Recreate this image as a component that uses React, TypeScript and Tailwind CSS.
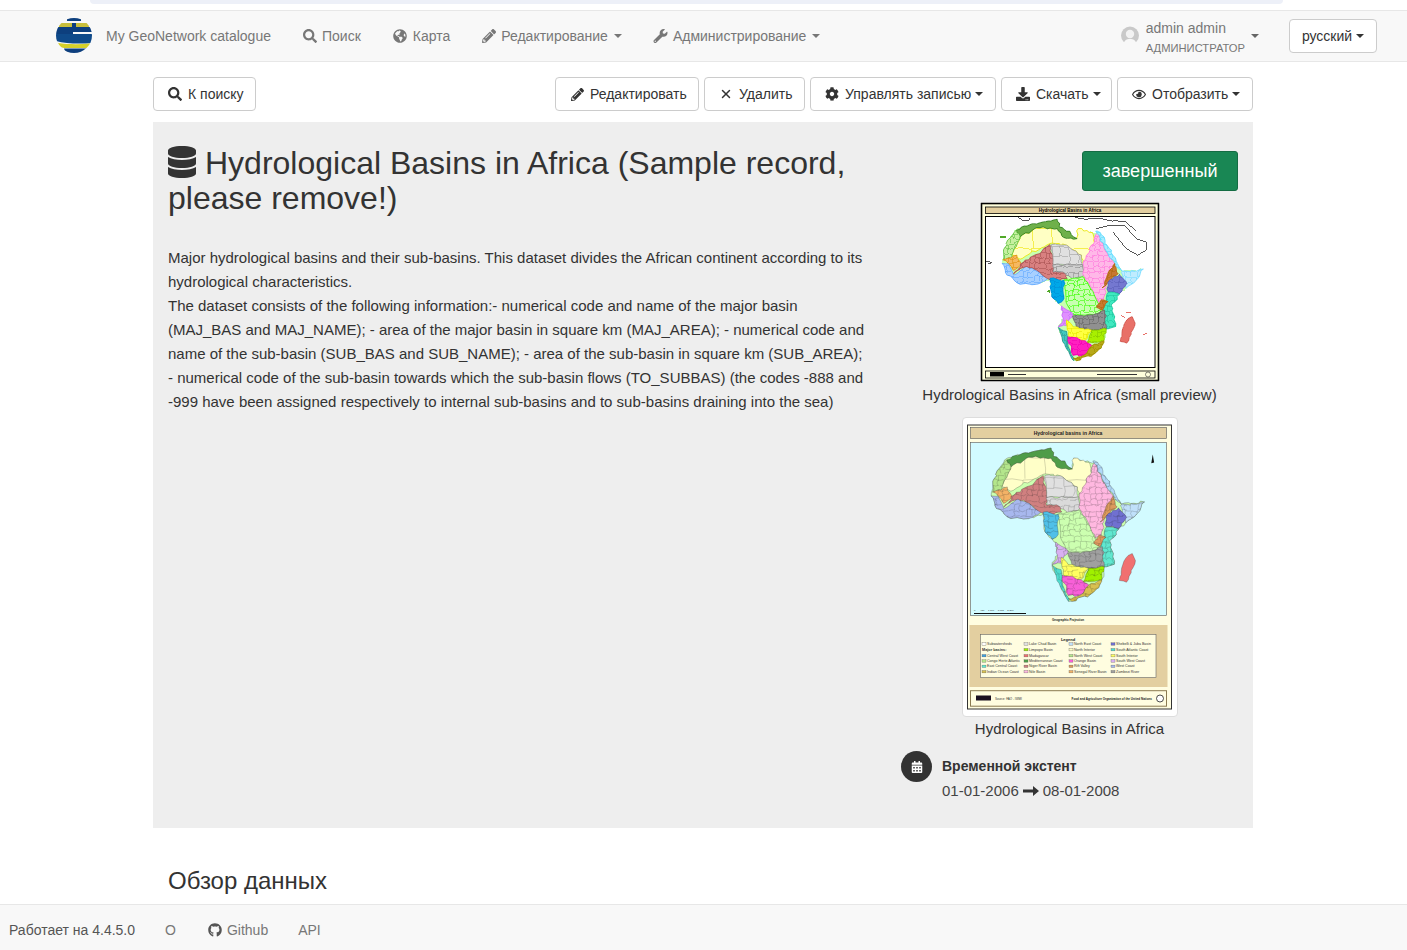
import type { ReactNode } from "react";
import {
  FaCalendarAlt,
  FaCog,
  FaDatabase,
  FaDownload,
  FaGithub,
  FaGlobeAmericas,
  FaPencilAlt,
  FaRegEye,
  FaSearch,
  FaWrench,
} from "react-icons/fa";
import { X } from "lucide-react";

type Region = { id: string; pts: number[]; fill: string; line: string; big: string };

const coast = [100,175,112,135,140,100,190,85,262,72,268,95,300,108,322,130,325,100,370,112,385,112,410,170,440,205,458,228,522,222,495,262,470,280,450,298,425,330,438,395,410,402,405,435,395,460,370,480,320,498,310,498,290,460,265,400,265,390,280,370,275,335,265,325,245,305,240,255,200,268,150,268,110,240,95,205];

const regions: Region[] = [
  { id: "sahara", pts: [125,180,150,125,200,97,240,92,262,100,290,125,320,130,325,100,368,112,382,160,345,210,335,180,290,150,240,145,180,175,150,192], fill: "#ffffc4", line: "#eee400", big: "#ffffc8" },
  { id: "med", pts: [138,105,190,85,262,72,268,95,300,108,322,130,280,126,262,100,200,97,150,125], fill: "#6fb04a", line: "#2f7d1f", big: "#4f9c48" },
  { id: "nw", pts: [100,175,112,135,138,105,150,125,125,180,125,190,100,192], fill: "#c6f0a0", line: "#5fc040", big: "#b4e68c" },
  { id: "senegal", pts: [98,194,140,180,155,210,130,226,115,206], fill: "#f6b860", line: "#e09010", big: "#f3b266" },
  { id: "guinea", pts: [95,205,115,206,130,240,170,210,200,225,235,250,200,268,150,268,110,240], fill: "#a8d0ff", line: "#60a8ff", big: "#a8b8ee" },
  { id: "niger", pts: [130,236,165,195,210,175,240,148,250,200,250,232,285,228,292,250,255,256,232,250,200,225,170,214], fill: "#d88080", line: "#a85050", big: "#d08080" },
  { id: "chad", pts: [245,148,290,150,335,180,338,208,250,210], fill: "#e0e0e0", line: "#a0a0a0", big: "#e0e0e0" },
  { id: "chad2", pts: [248,210,338,208,342,240,310,256,285,234,250,230], fill: "#d0d0d0", line: "#8c8c8c", big: "#dadada" },
  { id: "nile", pts: [340,206,365,150,385,112,405,165,435,205,440,225,415,260,400,320,385,322,370,290,342,242], fill: "#ffb8e8", line: "#ff78dc", big: "#ffb8e0" },
  { id: "redsea", pts: [378,108,392,112,440,198,458,228,440,214,410,168], fill: "#a8ecff", line: "#60dcff", big: "#b0d8f8" },
  { id: "horn", pts: [455,232,522,222,495,262,470,280], fill: "#c0ecff", line: "#78dcff", big: "#c0e0fa" },
  { id: "rift", pts: [435,205,446,236,415,262,398,278,410,250], fill: "#c87830", line: "#b06810", big: "#dc9a5c" },
  { id: "somali", pts: [415,262,450,238,472,265,450,296,415,290], fill: "#7478d0", line: "#5a60b8", big: "#7070d0" },
  { id: "east", pts: [415,292,450,298,425,330,438,395,410,402,400,345], fill: "#40e8c0", line: "#20c8a0", big: "#60e8d0" },
  { id: "congo", pts: [280,256,342,246,370,290,385,325,400,350,370,360,310,360,290,325], fill: "#c8ffb0", line: "#38ff00", big: "#ccffb0" },
  { id: "tana", pts: [395,314,415,320,398,346,380,336], fill: "#c87830", line: "#b06810", big: "#e09a60" },
  { id: "westc", pts: [240,250,282,256,282,312,265,326,245,305], fill: "#00a8e8", line: "#0090d8", big: "#50c0e8" },
  { id: "violet", pts: [275,333,310,360,305,368,290,392,265,396,280,370], fill: "#e090ff", line: "#c870f8", big: "#d8b0f0" },
  { id: "zambezi", pts: [308,364,370,360,405,346,410,402,370,406,320,396], fill: "#909090", line: "#686868", big: "#a0a0a0" },
  { id: "yellow", pts: [290,375,310,396,366,406,346,436,300,430], fill: "#ffff40", line: "#e8e800", big: "#ffff60" },
  { id: "lime", pts: [366,406,410,402,402,440,350,446], fill: "#a8f000", line: "#88c800", big: "#a0f000" },
  { id: "orange", pts: [292,425,346,438,374,460,340,482,310,482], fill: "#ff20c0", line: "#f000b0", big: "#f860d8" },
  { id: "namib", pts: [265,398,290,410,295,455,312,498,290,462], fill: "#40c8c0", line: "#309890", big: "#50dcd0" },
  { id: "cape", pts: [374,448,403,438,395,460,370,480,320,498,310,490,342,482], fill: "#b8a818", line: "#a09000", big: "#d8c050" },
  { id: "madagascar", pts: [488,365,497,385,490,405,472,445,452,440,462,395,470,378], fill: "#e87068", line: "#d05850", big: "#f07070" },
];

const noise = (a: number, b: number) => {
  const n = Math.sin(a * 12.9898 + b * 78.233) * 43758.5453;
  return n - Math.floor(n) - 0.5;
};

// break straight polygon edges up so basins don't look cut with a ruler
function roughen(pts: number[], amount = 7) {
  const out: number[] = [];
  for (let i = 0; i < pts.length; i += 2) {
    const [x0, y0] = [pts[i], pts[i + 1]];
    const [x1, y1] = [pts[(i + 2) % pts.length], pts[(i + 3) % pts.length]];
    const steps = Math.max(1, Math.round(Math.hypot(x1 - x0, y1 - y0) / 9));
    for (let s = 0; s < steps; s++) {
      const [x, y] = [x0 + ((x1 - x0) * s) / steps, y0 + ((y1 - y0) * s) / steps];
      out.push(x + (s ? noise(x, y) * amount : 0), y + (s ? noise(y, x) * amount : 0));
    }
  }
  return out;
}

const toPoints = (pts: number[]) => {
  const parts: string[] = [];
  for (let i = 0; i < pts.length; i += 2) parts.push(`${pts[i].toFixed(1)},${pts[i + 1].toFixed(1)}`);
  return parts.join(" ");
};

// sub-basin texture: broken jagged lines, clipped to each basin
function subLines(pts: number[], seed: number, step: number) {
  const xs = pts.filter((_, i) => i % 2 === 0);
  const ys = pts.filter((_, i) => i % 2 === 1);
  const [x0, x1, y0, y1] = [Math.min(...xs), Math.max(...xs), Math.min(...ys), Math.max(...ys)];
  let d = "";
  for (let y = y0 + 8; y < y1; y += step) {
    for (let x = x0; x < x1; x += step) {
      const [cx, cy] = [x + noise(x, y + seed) * 8, y + noise(y, x + seed) * 8];
      d += `M${cx.toFixed(1)} ${cy.toFixed(1)}`;
      d += `L${(cx + step * 0.5).toFixed(1)} ${(cy + noise(cx, seed) * 6).toFixed(1)}L${(cx + step).toFixed(1)} ${(cy + noise(seed, cy) * 6).toFixed(1)}`;
      if (noise(x + seed, y) > -0.2) d += `M${cx.toFixed(1)} ${cy.toFixed(1)}L${(cx + noise(cy, x) * 8).toFixed(1)} ${(cy + step * 0.5).toFixed(1)}L${(cx + noise(x, cy) * 8).toFixed(1)} ${(cy + step).toFixed(1)}`;
    }
  }
  return d;
}

function Basins({ big, prefix }: { big?: boolean; prefix: string }) {
  return (
    <>
      <polygon points={toPoints(roughen(coast))} fill={big ? "#ccffb0" : "#c8ffb0"} stroke={big ? "#222" : "none"} strokeWidth="0.8" />
      {regions.map((r, i) => {
        const shape = toPoints(roughen(r.pts));
        const step = r.id === "sahara" ? 60 : r.id === "chad" ? 26 : 16;
        return (
          <g key={r.id}>
            <clipPath id={`${prefix}-${r.id}`}>
              <polygon points={shape} />
            </clipPath>
            <polygon points={shape} fill={big ? r.big : r.fill} stroke={big ? "#222" : r.line} strokeWidth={big ? 0.7 : 2.5} strokeLinejoin="round" />
            {r.id !== "med" && r.id !== "madagascar" && (
              <path d={subLines(r.pts, i + 1, step)} fill="none" stroke={big ? "#222" : r.line} strokeWidth={big ? 0.5 : 1.8} clipPath={`url(#${prefix}-${r.id})`} />
            )}
          </g>
        );
      })}
    </>
  );
}

function SmallMap() {
  return (
    <svg width="180" height="180" viewBox="0 0 180 180" className="block">
      <rect x="0" y="0" width="180" height="180" fill="#ffffff" />
      <rect x="1.5" y="1.5" width="177" height="177" fill="#ffffdc" stroke="#000" strokeWidth="1.6" />
      <rect x="5.5" y="5" width="169.500" height="6.500" fill="#e3cf9f" stroke="#000" strokeWidth="0.8" />
      <text x="90" y="10" fontSize="4.500" fontWeight="700" textAnchor="middle" fontFamily="Liberation Sans, sans-serif" fill="#000">Hydrological Basins in Africa</text>
      <rect x="5.500" y="14.500" width="169.500" height="151" fill="#fff" stroke="#000" strokeWidth="1" />
      <svg x="6" y="15" width="169" height="150" viewBox="47 65 510 452" preserveAspectRatio="none" shapeRendering="crispEdges">
        <path d="M145 66l10 8 20 2 5-8M316 66l30 6 40-4 45 10M380 100l40-10 45 0 35 40 30 10 0 25-25 15-35-20-40-50M430 75l40 5 30 28M47 198l18 4-12 5" fill="none" stroke="#555" strokeWidth="3" />
        <Basins prefix="s" />
        <path d="M90 128h16v-4H90zM232 290l8-6v8z" fill="#50a828" stroke="#50a828" strokeWidth="3" />
        <path d="M454 362l12 6M470 352l14 2M522 420l12-6" fill="none" stroke="#e87068" strokeWidth="3" />
      </svg>
      <rect x="5.500" y="169" width="169.500" height="7" fill="#ffffdc" stroke="#000" strokeWidth="0.8" />
      <rect x="10" y="170" width="14" height="4.500" fill="#000" />
      <rect x="28" y="172" width="18" height="1" fill="#333" />
      <rect x="117" y="172" width="40" height="1" fill="#333" />
      <circle cx="168" cy="172.500" r="2.500" fill="none" stroke="#333" strokeWidth="0.6" />
    </svg>
  );
}

const legend: [string, string][][] = [
  [["#ffffff", "Subwatersheds"], ["", "Major basins:"], ["#40a0e0", "Central West Coast"], ["#b4e68c", "Congo Herte Atlantic"], ["#60e8d0", "East Central Coast"], ["#d8c050", "Indian Ocean Coast"]],
  [["#e0e0e0", "Lake Chad Basin"], ["#a0f000", "Limpopo Basin"], ["#f07070", "Madagascar"], ["#4f9c48", "Mediterranean Coast"], ["#d08080", "Niger River Basin"], ["#ffb8e0", "Nile Basin"]],
  [["#c0e0fa", "North East Coast"], ["#ffffc8", "North Interior"], ["#b4e68c", "North West Coast"], ["#f860d8", "Orange Basin"], ["#dc9a5c", "Rift Valley"], ["#f3b266", "Senegal River Basin"]],
  [["#7070d0", "Shebelli & Juba Basin"], ["#50dcd0", "South Atlantic Coast"], ["#ffff60", "South Interior"], ["#d8b0f0", "South West Coast"], ["#a8b8ee", "West Coast"], ["#a0a0a0", "Zambezi River"]],
];

function BigMap() {
  const colX = [15, 57, 102, 144];
  const rowY = [223, 228.7, 234.7, 240, 245.3, 250.7];
  return (
    <svg width="206" height="290" viewBox="0 0 206 290" className="block">
      <rect x="0.500" y="3" width="204" height="284" fill="#fffde0" stroke="#333" strokeWidth="1" />
      <rect x="3.500" y="5.500" width="196" height="11" fill="#e3cfa0" stroke="#555" strokeWidth="0.6" />
      <text x="101" y="13" fontSize="5" fontWeight="700" textAnchor="middle" fontFamily="Liberation Sans, sans-serif" fill="#222">Hydrological basins in Africa</text>
      <rect x="3.500" y="20.500" width="196" height="173" fill="#d2fbff" stroke="#555" strokeWidth="0.6" />
      <svg x="4" y="21" width="195" height="172" viewBox="39 58 543 478" preserveAspectRatio="none">
        <Basins big prefix="b" />
        <path d="M545 90l4 22-8 2z" fill="#111" />
      </svg>
      <path d="M7 191.500h52" stroke="#111" strokeWidth="1" />
      <text x="7" y="189" fontSize="2.500" fontFamily="Liberation Sans, sans-serif" fill="#333">0 &#160; &#160; &#160; 450 &#160; &#160; 1,100 &#160; &#160; 1,675 &#160; &#160; 2,200</text>
      <text x="101" y="199" fontSize="3" fontWeight="700" textAnchor="middle" fontFamily="Liberation Sans, sans-serif" fill="#222">Geographic Projection</text>
      <rect x="2.500" y="203" width="198" height="62" fill="#e3cfa0" />
      <rect x="13.500" y="212.500" width="175.500" height="43" fill="#fffde0" stroke="#666" strokeWidth="0.6" />
      <text x="101" y="219" fontSize="4" fontWeight="700" textAnchor="middle" fontFamily="Liberation Sans, sans-serif" fill="#222">Legend</text>
      {legend.map((col, c) =>
        col.map(([color, label], r) => (
          <g key={label}>
            {color && <rect x={colX[c]} y={rowY[r] - 2.200} width="4" height="2.400" fill={color} stroke="#555" strokeWidth="0.3" />}
            <text x={color ? colX[c] + 5 : colX[c]} y={rowY[r]} fontSize={color ? 3.600 : 3.800} fontWeight={color ? 400 : 700} fontFamily="Liberation Sans, sans-serif" fill="#333">{label}</text>
          </g>
        )),
      )}
      <rect x="3.500" y="268.700" width="196" height="15.500" fill="#fffde0" stroke="#8a7a50" strokeWidth="1" />
      <rect x="9" y="273.500" width="15" height="5" fill="#1a1020" />
      <text x="28" y="277.500" fontSize="3" fontFamily="Liberation Sans, sans-serif" fill="#333">Source: FAO - IWMI</text>
      <text x="185" y="277.500" fontSize="3" fontWeight="700" textAnchor="end" fontFamily="Liberation Sans, sans-serif" fill="#222">Food and Agriculture Organization of the United Nations</text>
      <circle cx="193" cy="276.500" r="3.500" fill="#fff" stroke="#222" strokeWidth="0.8" />
    </svg>
  );
}

function Logo() {
  return (
    <svg width="36" height="36" viewBox="0 0 36 36" className="block">
      <clipPath id="globe">
        <ellipse cx="18" cy="17.500" rx="18" ry="17.500" />
      </clipPath>
      <g clipPath="url(#globe)">
        <path d="M11 0h14v3H11z" fill="#0d3f7e" />
        <path d="M3 5h13v4H3zM20 5h13v4H20z" fill="#c8bf3c" />
        <path d="M16 5h4v9h-3v2H0V9h16z" fill="#0d3f7e" />
        <path d="M20 9h16v5H20z" fill="#0d3f7e" />
        <path d="M0 16h36v9c-10 1-26 1-36-2z" fill="#0f4a8a" />
        <path d="M2 25c10 1.500 22 1.500 32 .5v4.500H8c-3 0-5-3-6-5z" fill="#d6d02a" />
        <path d="M8 30.500h24L28 36H10z" fill="#0d3f7e" />
      </g>
    </svg>
  );
}

function UserIcon() {
  return (
    <svg width="18" height="20" viewBox="0 0 18 20" className="block">
      <circle cx="9" cy="9.500" r="9" fill="#c9c9c9" />
      <circle cx="9" cy="8" r="4.200" fill="#f2f2f2" />
      <path d="M2.500 18c1-4 3-5 6.500-5s5.500 1 6.500 5l-2 2h-9z" fill="#f8f8f8" />
    </svg>
  );
}

function Caret({ className = "" }: { className?: string }) {
  return <span className={`inline-block h-0 w-0 border-x-4 border-t-4 border-x-transparent border-t-current ${className}`} />;
}

function ToolButton({ icon, children, caret, className = "" }: { icon: ReactNode; children: ReactNode; caret?: boolean; className?: string }) {
  return (
    <button type="button" className={`flex h-[34px] items-center rounded border border-[#ccc] bg-white pl-[14px] text-sm text-[#333] ${className}`}>
      <span className="mr-[6px] flex w-[14px] justify-center">{icon}</span>
      <span>{children}</span>
      {caret && <Caret className="ml-1" />}
    </button>
  );
}

function NavItem({ icon, children, caret, className = "" }: { icon: ReactNode; children: ReactNode; caret?: boolean; className?: string }) {
  return (
    <div className={`flex items-center gap-[5px] text-sm text-[#777] ${className}`}>
      {icon}
      <span>{children}</span>
      {caret && <Caret className="ml-[1px]" />}
    </div>
  );
}

export default function App() {
  return (
    <div className="flex h-[950px] flex-col overflow-hidden bg-white font-['Liberation_Sans',Arial,sans-serif] text-sm text-[#333]">
      <div className="h-[10px] shrink-0 bg-white">
        <div className="mr-[124px] ml-[90px] h-1 rounded-b-xl bg-[#edf0f8]" />
      </div>
      <nav className="flex h-[52px] shrink-0 items-center border-y border-[#e7e7e7] bg-[#f8f8f8] pr-[30px] pl-[56px]">
        <Logo />
        <span className="ml-[14px] text-sm text-[#777]">My GeoNetwork catalogue</span>
        <NavItem className="ml-[32px]" icon={<FaSearch className="h-[14px] w-[14px]" />}>Поиск</NavItem>
        <NavItem className="ml-[31px]" icon={<FaGlobeAmericas className="h-[14px] w-[16px]" />}>Карта</NavItem>
        <NavItem className="ml-[32px]" icon={<FaPencilAlt className="h-[14px] w-[14px]" />} caret>Редактирование</NavItem>
        <NavItem className="ml-[31px]" icon={<FaWrench className="h-[14px] w-[15px]" />} caret>Администрирование</NavItem>
        <div className="ml-auto flex items-center">
          <UserIcon />
          <div className="ml-[7px] flex flex-col pt-[4px] text-[#777]">
            <span className="text-sm leading-[20px]">admin admin</span>
            <span className="text-[11.2px] leading-[20px]">АДМИНИСТРАТОР</span>
          </div>
          <Caret className="ml-[6px] text-[#666]" />
          <button type="button" className="ml-[30px] flex h-[34px] w-[88px] items-center justify-center rounded border border-[#ccc] bg-white text-sm text-[#333]">
            русский
            <Caret className="ml-1" />
          </button>
        </div>
      </nav>

      <main className="min-h-0 flex-1 overflow-hidden">
        <div className="ml-[153px] w-[1100px]">
          <div className="mt-[15px] flex gap-[5px]">
            <ToolButton className="mr-auto w-[103px]" icon={<FaSearch className="h-[14px] w-[14px]" />}>К поиску</ToolButton>
            <ToolButton className="w-[144px]" icon={<FaPencilAlt className="h-[13px] w-[13px]" />}>Редактировать</ToolButton>
            <ToolButton className="w-[101px]" icon={<X className="h-[14px] w-[14px]" strokeWidth={2.5} />}>Удалить</ToolButton>
            <ToolButton className="w-[186px]" icon={<FaCog className="h-[14px] w-[14px]" />} caret>Управлять записью</ToolButton>
            <ToolButton className="w-[111px]" icon={<FaDownload className="h-[14px] w-[14px]" />} caret>Скачать</ToolButton>
            <ToolButton className="w-[136px]" icon={<FaRegEye className="h-[15px] w-[15px]" />} caret>Отобразить</ToolButton>
          </div>

          <section className="mt-[11px] flex h-[706px] bg-[#eee]">
            <div className="w-[733px] px-[15px]">
              <h1 className="mt-[24px] text-[32px] leading-[35px] font-normal text-[#333]">
                <FaDatabase className="mr-[9px] inline-block h-8 w-[28px] align-[-4px]" />
                Hydrological Basins in Africa (Sample record, please remove!)
              </h1>
              <div className="mt-[30px] text-[15px] leading-6 text-[#333]">
                <p>Major hydrological basins and their sub-basins. This dataset divides the African continent according to its hydrological characteristics.</p>
                <p>The dataset consists of the following information:- numerical code and name of the major basin (MAJ_BAS and MAJ_NAME); - area of the major basin in square km (MAJ_AREA); - numerical code and name of the sub-basin (SUB_BAS and SUB_NAME); - area of the sub-basin in square km (SUB_AREA); - numerical code of the sub-basin towards which the sub-basin flows (TO_SUBBAS) (the codes -888 and -999 have been assigned respectively to internal sub-basins and to sub-basins draining into the sea)</p>
              </div>
            </div>
            <div className="flex w-[367px] flex-col items-center px-[15px]">
              <div className="mt-[29px] flex h-10 w-[156px] items-center justify-center self-end rounded-[3px] border border-[#146c43] bg-[#198754] text-lg text-white">завершенный</div>
              <div className="mt-[11px]"><SmallMap /></div>
              <div className="mt-[3px] h-5 text-center text-[15px] leading-5 text-[#333]">Hydrological Basins in Africa (small preview)</div>
              <div className="mt-[12px] rounded border border-[#ddd] bg-white p-1"><BigMap /></div>
              <div className="mt-[2px] h-5 text-center text-[15px] leading-5 text-[#333]">Hydrological Basins in Africa</div>
              <div className="mt-[12px] flex w-full items-start">
                <span className="flex h-[31px] w-[31px] items-center justify-center rounded-full bg-[#333] text-white">
                  <FaCalendarAlt className="h-[12px] w-[12px]" />
                </span>
                <div className="ml-[10px]">
                  <div className="mt-[5px] text-sm leading-5 font-bold text-[#333]">Временной экстент</div>
                  <div className="mt-[5px] flex items-center gap-1 text-[15px] leading-5 text-[#444]">
                    01-01-2006
                    <svg width="16" height="10" viewBox="0 0 16 10" className="block text-[#333]">
                      <path d="M0 3.500h10V0l6 5-6 5V6.500H0z" fill="currentColor" />
                    </svg>
                    08-01-2008
                  </div>
                </div>
              </div>
            </div>
          </section>

          <h2 className="mt-[40px] px-[15px] text-2xl leading-[26px] font-normal text-[#333]">Обзор данных</h2>
        </div>
      </main>

      <footer className="flex h-[46px] shrink-0 items-center border-t border-[#e7e7e7] bg-[#f8f8f8] pt-[4px] pl-[9px] text-sm text-[#777]">
        <span className="text-[#555]">Работает на 4.4.5.0</span>
        <span className="ml-[30px]">О</span>
        <span className="ml-[32px] flex items-center gap-[5px]"><FaGithub className="h-[14px] w-[14px] text-[#555]" />Github</span>
        <span className="ml-[30px]">API</span>
      </footer>
    </div>
  );
}
